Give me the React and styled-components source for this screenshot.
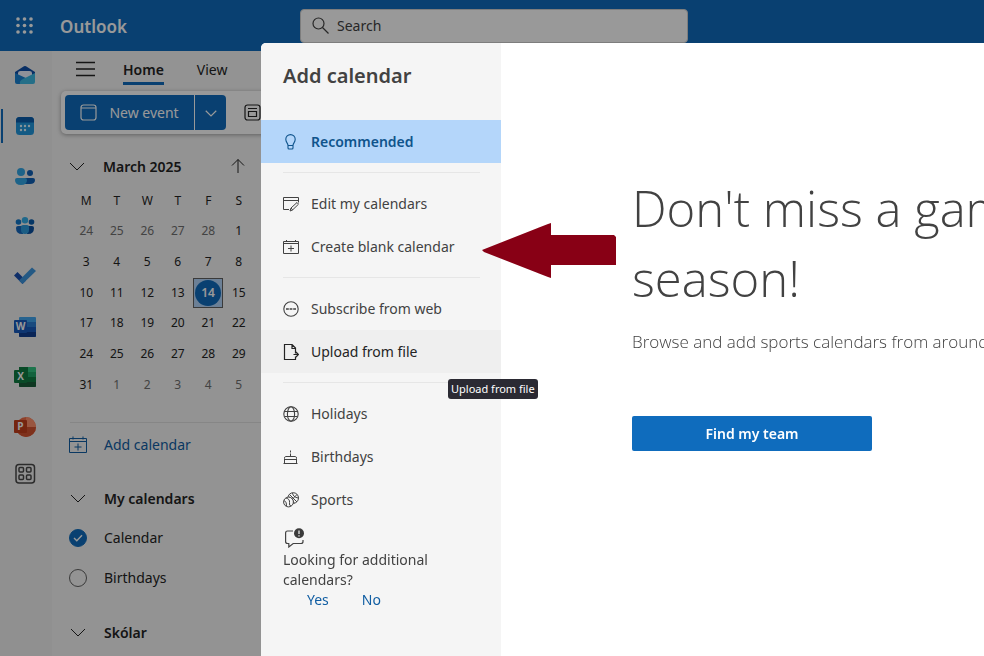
import React from "react";
import styled, { createGlobalStyle } from "styled-components";

const GlobalStyle = createGlobalStyle`
  *, *::before, *::after { box-sizing: border-box; }
  body { margin: 0; background: #f5f5f5; overflow: hidden; }
  body, button, input, table { font-family: "Noto Sans", "Open Sans", sans-serif; }
  button { border: 0; padding: 0; background: none; color: inherit; cursor: pointer; text-align: left; }
  svg { display: block; flex: none; }
`;

const Page = styled.div`
  height: 100vh;
  display: flex;
  flex-direction: column;
  overflow: hidden;
  color: #242424;
  font-size: 14px;
  line-height: 20px;
`;

/* ---------- header ---------- */

const Header = styled.header`
  flex: none;
  height: 51px;
  display: flex;
  align-items: center;
  padding-left: 16px;
  background: #0f6cbd;
  color: #fff;
`;

const Brand = styled.div`
  flex: none;
  width: 267px;
  padding: 2px 0 0 27px;
  font-size: 17px;
  font-weight: 600;
  line-height: 24px;
`;

const SearchBox = styled.label`
  display: flex;
  align-items: center;
  gap: 6px;
  flex: 0 1 388px;
  height: 34px;
  padding-left: 11px;
  border: 1px solid #d1d1d1;
  border-radius: 4px;
  background: #fff;
  color: #424242;
`;

const SearchInput = styled.input`
  flex: 1;
  min-width: 0;
  border: 0;
  outline: 0;
  background: transparent;
  font-size: 14px;
  color: #424242;
  &::placeholder { color: #424242; opacity: 1; }
`;

/* ---------- rail ---------- */

const Body = styled.div`
  flex: 1;
  min-height: 0;
  display: flex;
`;

const Rail = styled.nav`
  flex: none;
  width: 52px;
  background: #f0f0f0;
  display: flex;
  flex-direction: column;
`;

const RailButton = styled.button`
  height: ${(p) => (p.$active ? "34px" : p.$short ? "44px" : "50px")};
  margin: ${(p) => (p.$active ? "8px 0 8px 1px" : "0")};
  display: flex;
  align-items: center;
  padding-left: ${(p) => (p.$active ? "11px" : "14px")};
  border-left: ${(p) => (p.$active ? "2px solid #0f6cbd" : "0")};
`;

/* ---------- workspace ---------- */

const Workspace = styled.div`
  flex: 1;
  min-width: 0;
  display: flex;
  flex-direction: column;
  background: #f5f5f5;
`;

const TabRow = styled.div`
  flex: none;
  height: 40px;
  display: flex;
  align-items: flex-start;
  padding: 6px 0 0 24px;
`;

const MenuButton = styled.button`
  height: 24px;
  margin-right: 27px;
  display: flex;
  align-items: center;
`;

const Tab = styled.button`
  height: 28px;
  margin-right: 33px;
  font-size: 14px;
  line-height: 22px;
  font-weight: ${(p) => (p.$active ? 600 : 400)};
  border-bottom: 3px solid ${(p) => (p.$active ? "#0f6cbd" : "transparent")};
`;

const Ribbon = styled.div`
  flex: none;
  height: 43px;
  margin-left: 9px;
  padding: 4px;
  display: flex;
  align-items: center;
  gap: 18px;
  border-radius: 5px;
  background: #fff;
  box-shadow: 0 1px 4px rgba(0, 0, 0, 0.35);
`;

const SplitButton = styled.div`
  display: flex;
  gap: 1px;
  border-radius: 4px;
  overflow: hidden;
  background: #fff;
`;

const PrimaryPart = styled.button`
  height: 35px;
  width: ${(p) => (p.$narrow ? "31px" : "129px")};
  display: flex;
  align-items: center;
  justify-content: center;
  gap: 12px;
  background: #0f6cbd;
  color: #fff;
  font-size: 14px;
`;

const Sidebar = styled.aside`
  width: 209px;
  padding: 15px 0 0 15px;
`;

const MonthHeader = styled.div`
  height: 34px;
  display: flex;
  align-items: center;
  justify-content: space-between;
  padding: 0 15px 0 2px;
`;

const SectionButton = styled.button`
  height: ${(p) => (p.$tall ? "40px" : "34px")};
  display: flex;
  align-items: center;
  gap: 18px;
  font-size: 14px;
  font-weight: 600;
`;

const Days = styled.table`
  width: 183px;
  height: 214px;
  margin: 3px 0 0 4px;
  table-layout: fixed;
  border-collapse: collapse;
  font-size: 12px;
  line-height: 16px;
`;

const DayHead = styled.th`
  height: 30px;
  padding: 0;
  font-weight: 400;
  text-align: center;
`;

const DayCell = styled.td`
  height: 30px;
  padding: 0;
  text-align: center;
  color: ${(p) => (p.$muted ? "#707070" : "#242424")};
`;

const Today = styled.button`
  width: 30px;
  height: 30px;
  display: grid;
  place-items: center;
  border: 1px solid #616161;
  background: #b4d6fa;
`;

const TodayDot = styled.span`
  width: 26px;
  height: 26px;
  border-radius: 50%;
  background: #0f6cbd;
  color: #fff;
  font-size: 12px;
  font-weight: 600;
  line-height: 26px;
  text-align: center;
`;

const AddRow = styled.div`
  margin: 22px 0 0 3px;
  border-top: 1px solid #e0e0e0;
  padding: 4px 0 2px;
`;

const AddButton = styled.button`
  height: 35px;
  margin-left: -1px;
  display: flex;
  align-items: center;
  gap: 17px;
  color: #115ea3;
  font-size: 14px;
`;

const Group = styled.section`
  padding: 14px 0 0 3px;
`;

const CheckRow = styled.label`
  height: 40px;
  margin-left: -1px;
  display: flex;
  align-items: center;
  gap: 17px;
`;

const CheckSlot = styled.span`
  display: grid;
  place-items: center;
  & > * { grid-area: 1 / 1; }
  svg { pointer-events: none; }
`;

const RoundCheck = styled.input`
  appearance: none;
  width: 18px;
  height: 18px;
  margin: 0;
  border: 1px solid #616161;
  border-radius: 50%;
  &:checked { background: #0f6cbd; border-color: #0f6cbd; }
`;

/* ---------- dialog ---------- */

const Backdrop = styled.div`
  position: fixed;
  inset: 0;
  padding: 43px 0 0 261px;
  display: flex;
  background: rgba(0, 0, 0, 0.4);
`;

const Dialog = styled.div`
  position: relative;
  flex: 1;
  min-width: 0;
  display: flex;
  background: #fff;
  border-top-left-radius: 5px;
  color: #424242;
`;

const DialogNav = styled.nav`
  flex: none;
  width: 240px;
  background: #f5f5f5;
  border-top-left-radius: 5px;
`;

const DialogTitle = styled.h2`
  height: 77px;
  margin: 0;
  padding: 19px 22px 0;
  font-size: 20px;
  line-height: 28px;
  font-weight: 600;
`;

const NavItem = styled.button`
  width: 100%;
  height: 43px;
  padding-left: 22px;
  display: flex;
  align-items: center;
  gap: 12px;
  font-size: 14px;
  font-weight: ${(p) => (p.$selected ? 600 : 400)};
  color: ${(p) => (p.$selected ? "#0f548c" : p.$hovered ? "#242424" : "#424242")};
  background: ${(p) => (p.$selected ? "#b4d6fa" : p.$hovered ? "#efefef" : "transparent")};
`;

const Divider = styled.hr`
  height: 1px;
  margin: 9px 21px 9px 22px;
  border: 0;
  background: #e6e6e6;
`;

const Feedback = styled.div`
  padding: 7px 22px 0;
`;

const FeedbackText = styled.p`
  margin: 0;
  padding-top: 2px;
  line-height: 20px;
`;

const Answers = styled.div`
  display: flex;
  gap: 33px;
  padding-left: 24px;
`;

const Answer = styled.button`
  color: #115ea3;
  font-size: 14px;
  line-height: 20px;
`;

const Content = styled.main`
  flex: 1;
  min-width: 0;
  overflow: hidden;
  padding: 130px 0 0 131px;
  font-family: "Open Sans", "Noto Sans", sans-serif;
  white-space: nowrap;
`;

const Headline = styled.h1`
  margin: 0;
  font-size: 49px;
  line-height: 70px;
  font-weight: 300;
`;

const Lead = styled.p`
  margin: 17px 0 62px;
  font-size: 17px;
  line-height: 24px;
  font-weight: 300;
`;

const FindButton = styled.button`
  width: 240px;
  height: 35px;
  border-radius: 2px;
  background: #0f6cbd;
  color: #fff;
  font-size: 14px;
  font-weight: 600;
  text-align: center;
`;

const Tooltip = styled.div`
  position: absolute;
  left: 187px;
  top: 336px;
  padding: 0 3px;
  border-radius: 3px;
  background: #2b2a33;
  color: #fff;
  font-size: 11px;
  line-height: 20px;
  white-space: nowrap;
`;

const Pointer = styled.svg`
  position: absolute;
  left: 221px;
  top: 180px;
`;

/* ---------- icons ---------- */

const Line = ({ size = 18, box = 18, width = 1, view, children }) => (
  <svg width={size} height={size} viewBox={view || `0 0 ${box} ${box}`} fill="none" stroke="currentColor" strokeWidth={width} aria-hidden="true">
    {children}
  </svg>
);

const NavLine = (props) => <Line size={16} view="1 1 16 16" {...props} />;

const Waffle = () => (
  <svg width="17" height="17" viewBox="0 0 17 17" fill="currentColor" aria-hidden="true">
    {[2, 8.5, 15].map((y) => [2, 8.5, 15].map((x) => <circle key={`${x}-${y}`} cx={x} cy={y} r="1.8" />))}
  </svg>
);

const SearchIcon = () => (
  <Line size={17} box={17} width={1.2}><circle cx="6.5" cy="6.5" r="5.5" /><path d="M10.5 10.5l6 6" /></Line>
);

const ChevronDown = ({ size = 16, width = 1 }) => (
  <Line size={size} box={16} width={width}><path d="M1 5l7 7 7-7" /></Line>
);

const EventIcon = () => (
  <Line size={17} box={17} width={1.2}><rect x="1" y="1" width="15" height="15" rx="2.5" /><path d="M1 4h15" /></Line>
);

const CalendarPlus = () => (
  <Line size={18}><path d="M.5 2.5h17v14H.5zM.5 5.5h17M4 .5v3M14 .5v3M9 7.5v7M5.5 11h7" /></Line>
);

const CreateCalendar = () => (
  <NavLine><path d="M1.500 3.500h15v12h-15zM1.500 5.500h15M4.500 2v2M13.500 2v2M9 7.500v6M6 10.500h6" /></NavLine>
);

const Bulb = () => (
  <NavLine width={1.1}><path d="M6 12.500C6 10 3.800 9.600 3.800 6.300a4.700 4.700 0 0 1 9.400 0C13.200 9.600 11 10 11 12.500zM6 12.500v2.500q0 1 1 1h3q1 0 1-1v-2.500" /></NavLine>
);

const EditCalendar = () => (
  <NavLine><path d="M7 14.500H1.500v-12h15v5M1.500 5.500h15M8 16l1-3 6-5.500 1.500 1.700-6 5.800zM9 13l1.700 2" /></NavLine>
);

const WebIcon = () => (
  <NavLine width={1.1}><circle cx="9" cy="9" r="7.200" /><path d="M4 9h2.800M7.600 9h2.800M11.200 9H14" strokeWidth="1.500" /></NavLine>
);

const FileIcon = () => (
  <NavLine width={1.2}><path d="M13.500 13.500v3H2.500v-15h7.500l3.500 3.500v5.500M10 1.500v4h3.500M11.500 11.500h5M14 9l2.500 2.500L14 14" /></NavLine>
);

const Globe = () => (
  <NavLine width={1.1}><circle cx="9" cy="9" r="7.200" /><ellipse cx="9" cy="9" rx="3.600" ry="7.200" /><path d="M2.600 6.500h12.800M2.600 11.500h12.800" /></NavLine>
);

const Cake = () => (
  <NavLine><path d="M1.500 15.500h14M2.500 15.500v-5q0-2 1-2h10q1 0 1 2v5M2.500 11.500h12M8.500 8.500V5.500M8.500 2.500v2" /></NavLine>
);

const Ball = () => (
  <NavLine>
    <circle cx="11.200" cy="7" r="5.300" />
    <path d="M7.500 3.500l7.500 7.500M15 3.500l-8 8M10.500 2q.500 4 5.500 5M7 6q4 1 5 6.500" />
    <circle cx="6.500" cy="11" r="4.900" fill="#f5f5f5" />
    <path d="M4 7q4 1 3.500 4.500T9 15M2 9.500q3 1 2.500 5.500" />
  </NavLine>
);

const FeedbackIcon = () => (
  <svg width="22" height="20" viewBox="0 0 22 20" fill="none" stroke="#424242" strokeWidth="1.200" aria-hidden="true">
    <path d="M10 3H4.500Q2.600 3 2.600 5v8.500q0 2 2 2h1.200v3.500l4.400-3.500h7.800q2 0 2-2v-1.500" />
    <circle cx="16" cy="5.300" r="5" fill="#3b3b3b" stroke="none" />
    <path d="M16 2.500v3.600M16 7.200v1.200" stroke="#f5f5f5" />
  </svg>
);

const MailApp = () => (
  <svg width="22" height="22" viewBox="0 0 22 22" aria-hidden="true">
    <path d="M1 7l9-5.700q1-.6 2 0L21 7v7H1z" fill="#0f4fa8" />
    <path d="M4 8Q4 6 6.500 6h9Q18 6 18 8v6H4z" fill="#eef2ff" />
    <path d="M1 8l13 6-8 5H3q-2 0-2-2z" fill="#1a82d2" />
    <path d="M21 8v9q0 2-2 2H6q-1-3 3-5z" fill="#3fb9e3" />
  </svg>
);

const CalendarApp = () => (
  <svg width="22" height="22" viewBox="0 0 22 22" aria-hidden="true">
    <rect x="2" y="2" width="18" height="18" rx="3.500" fill="#2196dc" />
    <path d="M2 7.500v-2Q2 2 5.500 2h11Q20 2 20 5.500v2z" fill="#0b5cab" />
    <g fill="#e6f7ff">
      <circle cx="7" cy="11" r="1.200" /><circle cx="11" cy="11" r="1.200" /><circle cx="15" cy="11" r="1.200" />
      <circle cx="7" cy="15" r="1.200" /><circle cx="11" cy="15" r="1.200" />
    </g>
  </svg>
);

const PeopleApp = () => (
  <svg width="22" height="22" viewBox="0 0 22 22" aria-hidden="true">
    <circle cx="16" cy="8" r="3" fill="#0f5fb5" /><path d="M11 13h8q2 0 2 2 0 4-5 4h-5z" fill="#0f5fb5" />
    <circle cx="7" cy="7" r="4" fill="#31a5e4" /><path d="M3 13h8q2 0 2 2 0 5-6 5t-6-5q0-2 2-2z" fill="#31a5e4" />
  </svg>
);

const GroupsApp = () => (
  <svg width="22" height="22" viewBox="0 0 22 22" aria-hidden="true">
    <circle cx="4.500" cy="7" r="2.800" fill="#1277c9" /><circle cx="17.500" cy="7" r="2.800" fill="#0b5cab" /><circle cx="11" cy="5.300" r="3.200" fill="#35aee8" />
    <path d="M4 11h5v8H8q-6 0-6-6 0-2 2-2z" fill="#1668bd" /><path d="M13 11h5q2 0 2 2 0 6-6 6h-1z" fill="#0b4f9e" />
    <path d="M9 10h4q2 0 2 2v3q0 4-4 4t-4-4v-3q0-2 2-2z" fill="#2d9bdd" />
  </svg>
);

const TodoApp = () => (
  <svg width="22" height="22" viewBox="0 0 22 22" aria-hidden="true">
    <path d="M0 10.500L3.500 7l8.500 8.500-3.500 3.500z" fill="#1a4fb0" />
    <path d="M5 15.500L18 2.500l4 3.500L8.500 19z" fill="#3d95dd" />
  </svg>
);

const OfficeApp = ({ letter, colors, round }) => (
  <svg width="22" height="22" viewBox="0 0 22 22" aria-hidden="true">
    {round ? (
      <>
        <circle cx="12" cy="12" r="10" fill={colors[1]} />
        <path d="M12 2a10 10 0 0 1 10 10H12z" fill={colors[0]} />
        <path d="M2 12h20a10 10 0 0 1-20 0z" fill={colors[2]} />
      </>
    ) : (
      <>
        <rect x="5" y="2" width="17" height="20" rx="1" fill={colors[0]} />
        <path d="M5 7h17v5H5z" fill={colors[1]} />
        <path d="M5 12h17v5H5z" fill={colors[2]} />
        <path d="M5 17h17v4q0 1-1 1H6q-1 0-1-1z" fill={colors[3]} />
        {letter === "X" && <path d="M5 2h9v15H5z" fill="#107c41" />}
      </>
    )}
    <rect x="0" y="5" width="13" height="13" rx="1" fill={colors[4]} />
    <text x="6.500" y="15" fill="#fff" fontSize="10" fontWeight="700" textAnchor="middle" fontFamily="Open Sans, sans-serif">{letter}</text>
  </svg>
);

const MoreApps = () => (
  <svg width="22" height="22" viewBox="0 0 22 22" fill="none" stroke="#484848" strokeWidth="1.500" aria-hidden="true">
    <rect x="2" y="2.500" width="18.500" height="18.500" rx="3" />
    <rect x="5" y="5.500" width="4.500" height="4.500" rx="1" /><rect x="12.500" y="5.500" width="4.500" height="4.500" rx="1" />
    <rect x="5" y="13" width="4.500" height="4.500" rx="1" /><rect x="12.500" y="13" width="4.500" height="4.500" rx="1" />
  </svg>
);

/* ---------- data ---------- */

const APPS = [
  ["Mail", <MailApp />],
  ["Calendar", <CalendarApp />],
  ["People", <PeopleApp />],
  ["Groups", <GroupsApp />],
  ["To Do", <TodoApp />],
  ["Word", <OfficeApp letter="W" colors={["#41a5ee", "#2b7cd3", "#185abd", "#103f91", "#185abd"]} />],
  ["Excel", <OfficeApp letter="X" colors={["#33c481", "#21a366", "#107c41", "#185c37", "#107c41"]} />],
  ["PowerPoint", <OfficeApp letter="P" round colors={["#ff8f6b", "#ed6c47", "#d35230", "", "#c43e1c"]} />],
];

const WEEKS = [
  [24, 25, 26, 27, 28, 1],
  [3, 4, 5, 6, 7, 8],
  [10, 11, 12, 13, 14, 15],
  [17, 18, 19, 20, 21, 22],
  [24, 25, 26, 27, 28, 29],
  [31, 1, 2, 3, 4, 5],
];

const isMuted = (week, day) => (week === 0 && day > 20) || (week === 5 && day < 10);

const SECTIONS = [
  [{ label: "Recommended", icon: <Bulb />, selected: true }],
  [{ label: "Edit my calendars", icon: <EditCalendar /> }, { label: "Create blank calendar", icon: <CreateCalendar /> }],
  [{ label: "Subscribe from web", icon: <WebIcon /> }, { label: "Upload from file", icon: <FileIcon />, hovered: true }],
  [{ label: "Holidays", icon: <Globe /> }, { label: "Birthdays", icon: <Cake /> }, { label: "Sports", icon: <Ball /> }],
];

function MonthGrid() {
  return (
    <Days aria-label="March 2025">
      <thead>
        <tr>{["M", "T", "W", "T", "F", "S"].map((d, i) => <DayHead key={i} scope="col">{d}</DayHead>)}</tr>
      </thead>
      <tbody>
        {WEEKS.map((week, w) => (
          <tr key={w}>
            {week.map((day) => (
              <DayCell key={day} $muted={isMuted(w, day)}>
                {w === 2 && day === 14 ? <Today><TodayDot>14</TodayDot></Today> : day}
              </DayCell>
            ))}
          </tr>
        ))}
      </tbody>
    </Days>
  );
}

function CalendarCheck({ label, defaultChecked }) {
  const [checked, setChecked] = React.useState(Boolean(defaultChecked));
  return (
    <CheckRow>
      <CheckSlot>
        <RoundCheck type="checkbox" checked={checked} onChange={(e) => setChecked(e.target.checked)} />
        {checked && (
          <svg width="10" height="8" viewBox="0 0 10 8" fill="none" stroke="#fff" strokeWidth="1.400" aria-hidden="true">
            <path d="M1 4l2.800 2.800L9 1.200" />
          </svg>
        )}
      </CheckSlot>
      {label}
    </CheckRow>
  );
}

function AddCalendarDialog() {
  return (
    <Backdrop>
      <Dialog role="dialog" aria-labelledby="dialog-title">
        <DialogNav>
          <DialogTitle id="dialog-title">Add calendar</DialogTitle>
          {SECTIONS.map((items, i) => (
            <React.Fragment key={i}>
              {i > 0 && <Divider />}
              {items.map((item) => (
                <NavItem key={item.label} $selected={item.selected} $hovered={item.hovered}>
                  {item.icon}
                  {item.label}
                </NavItem>
              ))}
            </React.Fragment>
          ))}
          <Feedback>
            <FeedbackIcon />
            <FeedbackText>Looking for additional calendars?</FeedbackText>
            <Answers><Answer>Yes</Answer><Answer>No</Answer></Answers>
          </Feedback>
        </DialogNav>
        <Content>
          <Headline>Don't miss a game<br />season!</Headline>
          <Lead>Browse and add sports calendars from around</Lead>
          <FindButton>Find my team</FindButton>
        </Content>
        <Tooltip role="tooltip">Upload from file</Tooltip>
        <Pointer width="134" height="55" viewBox="0 0 134 55" aria-hidden="true">
          <path d="M0 27L66 1l3-1v12h63l2 2v28H69v13l-3-1L2 29z" fill="#880015" />
        </Pointer>
      </Dialog>
    </Backdrop>
  );
}

export default function App() {
  return (
    <Page>
      <GlobalStyle />
      <Header>
        <button aria-label="App launcher"><Waffle /></button>
        <Brand>Outlook</Brand>
        <SearchBox>
          <SearchIcon />
          <SearchInput type="search" placeholder="Search" aria-label="Search" />
        </SearchBox>
      </Header>
      <Body>
        <Rail>
          {APPS.map(([name, icon]) => (
            <RailButton key={name} aria-label={name} $active={name === "Calendar"}>{icon}</RailButton>
          ))}
          <RailButton aria-label="More apps" $short><MoreApps /></RailButton>
        </Rail>
        <Workspace>
          <TabRow>
            <MenuButton aria-label="Toggle navigation">
              <Line size={20} box={20} width={1.3}><path d="M0 3.500h19M0 10h19M0 16.500h19" /></Line>
            </MenuButton>
            <Tab $active>Home</Tab>
            <Tab>View</Tab>
          </TabRow>
          <Ribbon>
            <SplitButton>
              <PrimaryPart><EventIcon />New event</PrimaryPart>
              <PrimaryPart $narrow aria-label="More new items"><ChevronDown size={12} width={1.6} /></PrimaryPart>
            </SplitButton>
            <button aria-label="Day view">
              <Line size={17} box={17} width={1.2}><rect x="1" y="1" width="15" height="15" rx="2.500" /><path d="M4 4.500h9M4.500 7.500h8v5h-8z" /></Line>
            </button>
          </Ribbon>
          <Sidebar>
            <MonthHeader>
              <SectionButton><ChevronDown />March 2025</SectionButton>
              <button aria-label="Previous month"><Line size={16} box={16}><path d="M8 15V1.500M2 7.500l6-6 6 6" /></Line></button>
            </MonthHeader>
            <MonthGrid />
            <AddRow><AddButton><CalendarPlus />Add calendar</AddButton></AddRow>
            <Group>
              <SectionButton $tall><ChevronDown />My calendars</SectionButton>
              <CalendarCheck label="Calendar" defaultChecked />
              <CalendarCheck label="Birthdays" />
            </Group>
            <Group>
              <SectionButton $tall><ChevronDown />Skólar</SectionButton>
            </Group>
          </Sidebar>
        </Workspace>
      </Body>
      <AddCalendarDialog />
    </Page>
  );
}
